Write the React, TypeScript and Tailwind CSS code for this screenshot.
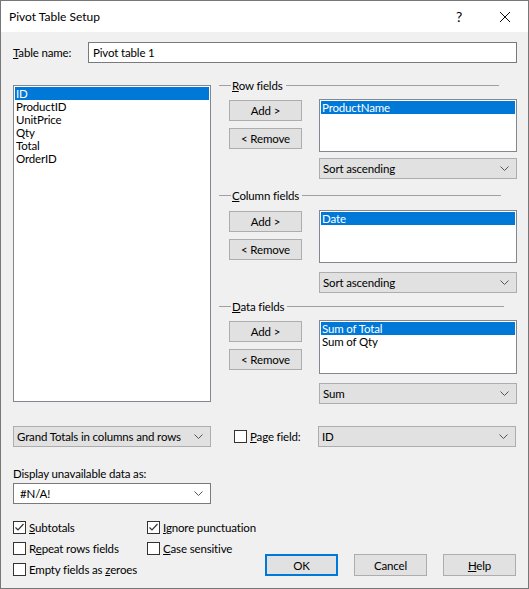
import React from "react";

const font = { fontFamily: 'Lato, "Liberation Sans", Arial, sans-serif' };

function Chevron() {
  return (
    <svg width="9" height="6" viewBox="0 0 9 6" className="shrink-0">
      <polyline points="0.5,0.5 4.5,4.5 8.5,0.5" fill="none" stroke="#555" strokeWidth="1" />
    </svg>
  );
}

function Combo({ text, w, white }: { text: string; w: string; white?: boolean }) {
  return (
    <div
      className={`${w} h-[21px] flex items-center justify-between pr-[7px] border ${
        white ? "bg-white border-[#7a7a7a] pl-[6px]" : "bg-[#e1e1e1] border-[#adadad] pl-[3px]"
      }`}
    >
      <span className="leading-[13px] whitespace-nowrap">{text}</span>
      <Chevron />
    </div>
  );
}

function Btn({ children, def, h }: { children: React.ReactNode; def?: boolean; h?: string }) {
  return (
    <div
      className={`w-[73px] ${h ?? "h-[21px]"} flex items-center justify-center bg-[#e1e1e1] ${
        def ? "border-2 border-[#0078d7]" : "border border-[#adadad]"
      }`}
    >
      <span className="leading-[13px]">{children}</span>
    </div>
  );
}

function Check({ checked, children }: { checked?: boolean; children: React.ReactNode }) {
  return (
    <div className="flex items-center h-[13px]">
      <div className="w-[13px] h-[13px] border border-[#333] bg-white flex items-center justify-center shrink-0">
        {checked && (
          <svg width="11" height="11" viewBox="0 0 11 11">
            <polyline points="1.5,5.5 4,8 9.5,2" fill="none" stroke="#333" strokeWidth="1.2" />
          </svg>
        )}
      </div>
      <span className="ml-[3px] leading-[13px] whitespace-nowrap">{children}</span>
    </div>
  );
}

function GroupHeader({ children, w }: { children: React.ReactNode; w: string }) {
  return (
    <div className={`flex items-center h-[13px] ${w}`}>
      <div className="w-[12px] border-t border-[#a0a0a0]" />
      <span className="px-[1px] leading-[13px]">{children}</span>
      <div className="flex-1 border-t border-[#a0a0a0] ml-[2px]" />
    </div>
  );
}

function Item({ text, sel }: { text: string; sel?: boolean }) {
  return (
    <div className={`h-[13px] flex items-center pl-[1px] overflow-hidden ${sel ? "bg-[#0078d7] text-white" : ""}`}>
      <span className="leading-[12px] whitespace-nowrap">{text}</span>
    </div>
  );
}

function FieldList({ items, h }: { items: string[]; h: string }) {
  return (
    <div className={`w-[198px] ${h} bg-white border border-[#828790] p-[1px]`}>
      {items.map((it, i) => (
        <Item key={it} text={it} sel={i === 0} />
      ))}
    </div>
  );
}

function Section({
  label,
  items,
  sort,
  mt,
  listMt,
  listH,
  comboMt,
  lineW,
}: {
  label: React.ReactNode;
  items: string[];
  sort: string;
  mt: string;
  listMt: string;
  listH: string;
  comboMt: string;
  lineW: string;
}) {
  return (
    <div className={`flex flex-col ${mt}`}>
      <GroupHeader w={lineW}>{label}</GroupHeader>
      <div className={`flex ${listMt} pl-[10px]`}>
        <div className="flex flex-col gap-[7px] mt-[1px]">
          <Btn>Add &gt;</Btn>
          <Btn>&lt; Remove</Btn>
        </div>
        <div className="ml-[17px] flex flex-col">
          <FieldList items={items} h={listH} />
          <div className={comboMt}>
            <Combo text={sort} w="w-[198px]" />
          </div>
        </div>
      </div>
    </div>
  );
}

export default function App() {
  return (
    <div
      className="w-[529px] h-[589px] border border-[#777] bg-[#f0f0f0] text-[11.5px] tracking-[-0.15px] text-black flex flex-col overflow-hidden"
      style={font}
    >
      {/* Title bar */}
      <div className="h-[31px] bg-white flex items-center shrink-0">
        <span className="ml-[8px] text-[12px] tracking-normal leading-[15px]">Pivot Table Setup</span>
        <span className="ml-auto mr-[37px] text-[14px] leading-[15px]">?</span>
        <svg width="12" height="12" viewBox="0 0 12 12" className="mr-[17px]">
          <line x1="1" y1="1" x2="11" y2="11" stroke="#111" strokeWidth="1" />
          <line x1="11" y1="1" x2="1" y2="11" stroke="#111" strokeWidth="1" />
        </svg>
      </div>

      {/* Body */}
      <div className="flex flex-col pl-[12px] pr-[11px] pt-[10px]">
        <div className="flex items-center h-[21px]">
          <span className="w-[75px] leading-[13px]">
            <u>T</u>able name:
          </span>
          <div className="flex-1 h-[21px] bg-white border border-[#7a7a7a] flex items-center pl-[4px]">
            <span className="leading-[13px]">Pivot table 1</span>
          </div>
        </div>

        <div className="flex mt-[16px]">
          <div className="w-[198px] h-[317px] bg-white border border-[#828790] p-[1px] mt-[6px]">
            {["ID", "ProductID", "UnitPrice", "Qty", "Total", "OrderID"].map((it, i) => (
              <Item key={it} text={it} sel={i === 0} />
            ))}
          </div>

          <div className="ml-[8px] flex flex-col">
            <Section
              label={
                <>
                  <u>R</u>ow fields
                </>
              }
              items={["ProductName"]}
              sort="Sort ascending"
              mt="mt-[0px]"
              listMt="mt-[7px]"
              listH="h-[53px]"
              comboMt="mt-[6px]"
              lineW="w-[280px]"
            />
            <Section
              label={
                <>
                  <u>C</u>olumn fields
                </>
              }
              items={["Date"]}
              sort="Sort ascending"
              mt="mt-[10px]"
              listMt="mt-[8px]"
              listH="h-[53px]"
              comboMt="mt-[9px]"
              lineW="w-[282px]"
            />
            <Section
              label={
                <>
                  <u>D</u>ata fields
                </>
              }
              items={["Sum of Total", "Sum of Qty"]}
              sort="Sum"
              mt="mt-[7px]"
              listMt="mt-[7px]"
              listH="h-[54px]"
              comboMt="mt-[9px]"
              lineW="w-[285px]"
            />
          </div>
        </div>

        <div className="flex items-center mt-[22px]">
          <Combo text="Grand Totals in columns and rows" w="w-[198px]" />
          <div className="ml-[23px] w-[84px]">
            <Check>
              <u>P</u>age field:
            </Check>
          </div>
          <Combo text="ID" w="w-[198px]" />
        </div>

        <div className="mt-[20px] leading-[13px]">Display unavailable data as:</div>
        <div className="mt-[3px]">
          <Combo text="#N/A!" w="w-[198px]" white />
        </div>

        <div className="flex mt-[16px]">
          <div className="grid grid-cols-[134px_auto] gap-y-[7.5px] pt-[1px]">
            <Check checked>
              <u>S</u>ubtotals
            </Check>
            <Check checked>
              <u>I</u>gnore punctuation
            </Check>
            <Check>
              R<u>e</u>peat rows fields
            </Check>
            <Check>
              <u>C</u>ase sensitive
            </Check>
            <Check>
              Empty fields as <u>z</u>eroes
            </Check>
          </div>
          <div className="ml-auto mr-[1px] flex gap-[16px] mt-[34px]">
            <Btn def h="h-[22px]">
              OK
            </Btn>
            <Btn h="h-[22px]">Cancel</Btn>
            <Btn h="h-[22px]">
              <u>H</u>elp
            </Btn>
          </div>
        </div>
      </div>
    </div>
  );
}
